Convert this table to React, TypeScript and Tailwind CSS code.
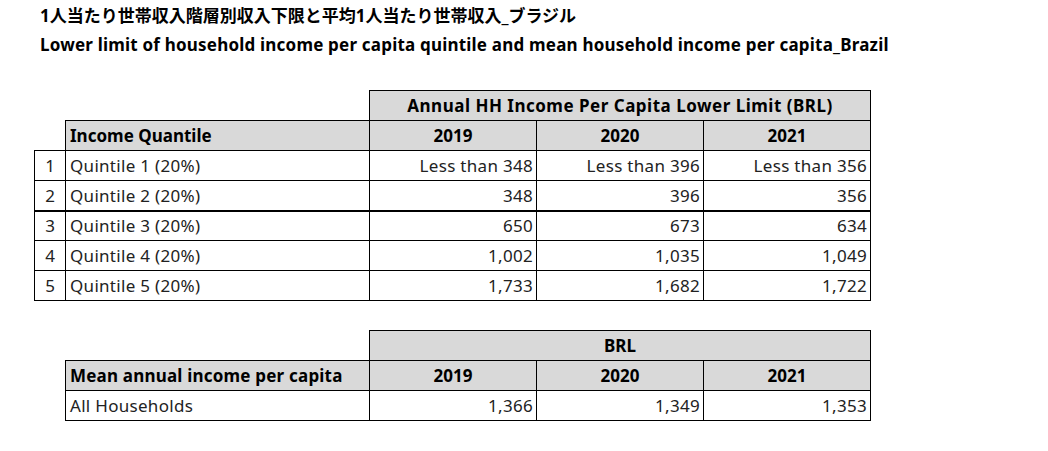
const rows = [
  { n: 1, label: 'Quintile 1 (20%)', v: ['Less than 348', 'Less than 396', 'Less than 356'] },
  { n: 2, label: 'Quintile 2 (20%)', v: ['348', '396', '356'] },
  { n: 3, label: 'Quintile 3 (20%)', v: ['650', '673', '634'] },
  { n: 4, label: 'Quintile 4 (20%)', v: ['1,002', '1,035', '1,049'] },
  { n: 5, label: 'Quintile 5 (20%)', v: ['1,733', '1,682', '1,722'] },
];

const years = ['2019', '2020', '2021'];
const mean = ['1,366', '1,349', '1,353'];

const font = { fontFamily: '"Noto Sans", "Noto Sans CJK JP", sans-serif' };

export default function App() {
  return (
    <div className="w-[1048px] h-[451px] bg-white text-black overflow-hidden" style={font}>
      <div className="pl-[40px] pt-[4px]">
        <h1 className="text-[17px] font-bold leading-[24px]">
          1人当たり世帯収入階層別収入下限と平均1人当たり世帯収入_ブラジル
        </h1>
        <h2 className="text-[17px] font-bold leading-[34px] tracking-[0.2px]">
          Lower limit of household income per capita quintile and mean household income per capita_Brazil
        </h2>
      </div>

      <div className="pl-[34px] pt-[28px]">
        <table className="border-collapse table-fixed text-[17px] leading-none">
          <colgroup>
            <col className="w-[31px]" />
            <col className="w-[304px]" />
            <col className="w-[167px]" />
            <col className="w-[167px]" />
            <col className="w-[167px]" />
          </colgroup>
          <tbody>
            <tr className="h-[30px]">
              <td />
              <td />
              <td colSpan={3} className="border border-black bg-[#d9d9d9] text-center font-bold tracking-[0.5px]">
                Annual HH Income Per Capita Lower Limit (BRL)
              </td>
            </tr>
            <tr className="h-[30px]">
              <td />
              <td className="border border-black bg-[#d9d9d9] px-[4px] font-bold">Income Quantile</td>
              {years.map((y) => (
                <td key={y} className="border border-black bg-[#d9d9d9] text-center font-bold">
                  {y}
                </td>
              ))}
            </tr>
            {rows.map((r) => (
              <tr key={r.n} className={r.n === 3 ? 'h-[30px] border-t-2 border-black' : 'h-[30px]'}>
                <td className="border border-black text-center text-[#222]">{r.n}</td>
                <td className="border border-black px-[4px] text-[#222] tracking-[0.3px]">{r.label}</td>
                {r.v.map((v, i) => (
                  <td key={i} className="border border-black text-right pr-[3px] text-[#222] tracking-[0.3px]">
                    {v}
                  </td>
                ))}
              </tr>
            ))}
          </tbody>
        </table>

        <table className="border-collapse table-fixed text-[17px] leading-none ml-[31px] mt-[29px]">
          <colgroup>
            <col className="w-[304px]" />
            <col className="w-[167px]" />
            <col className="w-[167px]" />
            <col className="w-[167px]" />
          </colgroup>
          <tbody>
            <tr className="h-[30px]">
              <td />
              <td colSpan={3} className="border border-black bg-[#d9d9d9] text-center font-bold">
                BRL
              </td>
            </tr>
            <tr className="h-[30px]">
              <td className="border border-black bg-[#d9d9d9] px-[4px] font-bold tracking-[0.2px]">
                Mean annual income per capita
              </td>
              {years.map((y) => (
                <td key={y} className="border border-black bg-[#d9d9d9] text-center font-bold">
                  {y}
                </td>
              ))}
            </tr>
            <tr className="h-[30px]">
              <td className="border border-black px-[4px] text-[#222] tracking-[0.3px]">All Households</td>
              {mean.map((v, i) => (
                <td key={i} className="border border-black text-right pr-[3px] text-[#222] tracking-[0.3px]">
                  {v}
                </td>
              ))}
            </tr>
          </tbody>
        </table>
      </div>
    </div>
  );
}
